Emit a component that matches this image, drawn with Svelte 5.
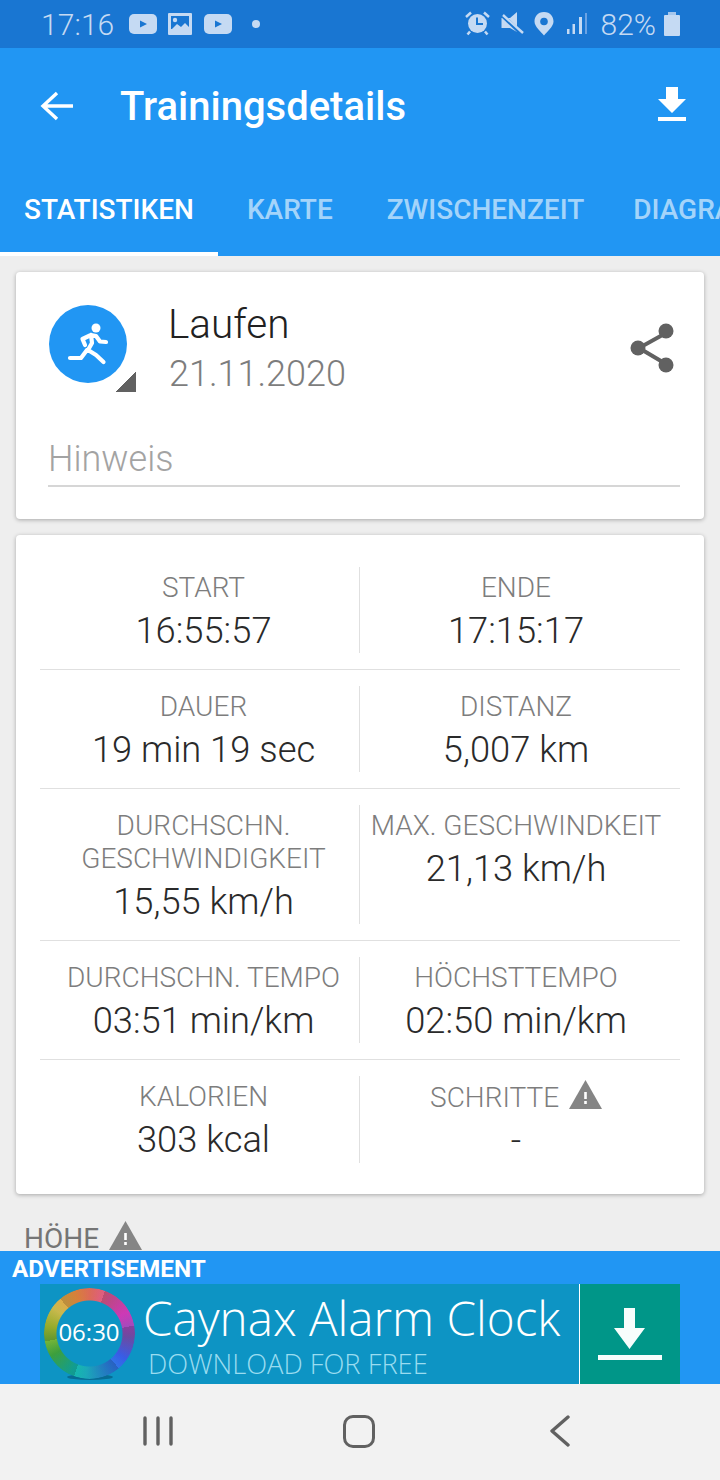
<script>
  const rows = [
    [{ label: "START", value: "16:55:57" }, { label: "ENDE", value: "17:15:17" }],
    [{ label: "DAUER", value: "19 min 19 sec" }, { label: "DISTANZ", value: "5,007 km" }],
    [
      { label: "DURCHSCHN. GESCHWINDIGKEIT", value: "15,55 km/h" },
      { label: "MAX. GESCHWINDKEIT", value: "21,13 km/h" },
    ],
    [{ label: "DURCHSCHN. TEMPO", value: "03:51 min/km" }, { label: "HÖCHSTTEMPO", value: "02:50 min/km" }],
    [{ label: "KALORIEN", value: "303 kcal" }, { label: "SCHRITTE", value: "-", warn: true }],
  ];
  const tabs = ["STATISTIKEN", "KARTE", "ZWISCHENZEIT", "DIAGRAMME"];
</script>

{#snippet warning()}
  <svg class="warn" width="33" height="29" viewBox="0 0 33 29">
    <path d="M16.500 0 L33 29 H0 Z" fill="#858585" />
    <rect x="15.200" y="12" width="2.600" height="7" fill="#fff" />
    <rect x="15.200" y="21" width="2.600" height="3" fill="#fff" />
  </svg>
{/snippet}

<div class="page">
  <div class="status">
    <span class="clock">17:16</span>
    <svg class="s-icons" width="134" height="24" viewBox="0 0 134 24">
      <rect x="1" y="1" width="28" height="20" rx="5" fill="#c5daf3" />
      <path d="M12 7.500 L19 11 L12 14.500 Z" fill="#1976d2" />
      <rect x="40" y="0" width="24" height="22" rx="1" fill="#c5daf3" />
      <rect x="43" y="3" width="18" height="13" fill="#1976d2" />
      <circle cx="47" cy="7" r="2.200" fill="#c5daf3" />
      <path d="M41 19 L49 11 L53 14 L57 10 L63 16 V21 H41 Z" fill="#c5daf3" />
      <rect x="76" y="1" width="28" height="20" rx="5" fill="#c5daf3" />
      <path d="M87 7.500 L94 11 L87 14.500 Z" fill="#1976d2" />
      <circle cx="128" cy="11" r="4" fill="#c5daf3" />
    </svg>
    <span class="grow"></span>
    <svg width="124" height="26" viewBox="0 0 124 26" class="s-right">
      <circle cx="12.500" cy="12.500" r="9.500" fill="#c5daf3" />
      <path d="M12 6.500 V13 H18" fill="none" stroke="#1976d2" stroke-width="2" />
      <path d="M1 6 L6 1.500 M24 6 L19 1.500 M5 20.500 L2.500 23.500 M20 20.500 L22.500 23.500" stroke="#c5daf3" stroke-width="2.500" />
      <path d="M36.500 7 H45 L52 1 V21 L45 17 H36.500 Z" fill="#c5daf3" />
      <path d="M38 5 L58 24" stroke="#1976d2" stroke-width="4" />
      <path d="M38 4 L58 22" stroke="#c5daf3" stroke-width="2.400" />
      <path d="M79 1 C72.500 1 69.500 6 69.500 10.500 C69.500 15.500 76 21 79 24.500 C82 21 88.500 15.500 88.500 10.500 C88.500 6 85.500 1 79 1 Z" fill="#c5daf3" />
      <circle cx="79" cy="10.500" r="3.800" fill="#1976d2" />
      <rect x="102" y="18" width="2.500" height="5" fill="#c5daf3" />
      <rect x="107.500" y="13" width="2.500" height="10" fill="#c5daf3" />
      <rect x="114" y="6" width="3" height="17" fill="#c5daf3" />
      <rect x="120" y="2" width="2" height="21" fill="#6ba3e4" />
    </svg>
    <span class="batt-text">82%</span>
    <svg class="batt" width="16" height="24" viewBox="0 0 16 24">
      <rect x="4" y="0" width="8" height="3" fill="#a5c6ec" />
      <rect x="0" y="3" width="16" height="21" rx="1" fill="#c5daf3" />
    </svg>
  </div>

  <header>
    <div class="toolbar">
      <svg class="back" width="36" height="32" viewBox="0 0 36 32">
        <path d="M34 16 H4 M18 3 L4 16 L18 29" fill="none" stroke="#fff" stroke-width="3.400" />
      </svg>
      <h1>Trainingsdetails</h1>
      <svg class="save" width="28" height="34" viewBox="0 0 28 34">
        <path d="M8 0 H20 V12 H28 L14 26 L0 12 H8 Z" fill="#fff" />
        <rect x="0" y="30" width="28" height="4" fill="#fff" />
      </svg>
    </div>
    <nav class="tabs">
      {#each tabs as tab, i}
        <div class="tab" class:active={i === 0}>{tab}</div>
      {/each}
    </nav>
  </header>

  <main>
    <section class="card head">
      <div class="top">
        <div class="avatar">
          <svg width="78" height="78" viewBox="0 0 78 78">
            <circle cx="39" cy="39" r="39" fill="#2196f3" />
            <circle cx="47" cy="23" r="4.500" fill="#fff" />
            <path d="M42 30 L47 31 L51 36.500 L57 37 M36 40 L33.500 34 L42 30 L43 38 L39 45 L47 50 L54.500 57 M38 45 L32 53 L21 53"
              fill="none" stroke="#fff" stroke-width="4.200" stroke-linecap="round" stroke-linejoin="round" />
          </svg>
          <span class="corner"></span>
        </div>
        <div class="title">
          <div class="name">Laufen</div>
          <div class="date">21.11.2020</div>
        </div>
        <svg class="share" width="46" height="50" viewBox="0 0 46 50">
          <path d="M36 10 L9 25 L36 41" fill="none" stroke="#616161" stroke-width="4" />
          <circle cx="36" cy="8" r="7.500" fill="#616161" />
          <circle cx="8" cy="25" r="7.500" fill="#616161" />
          <circle cx="36" cy="42" r="7.500" fill="#616161" />
        </svg>
      </div>
      <div class="note">Hinweis</div>
    </section>

    <section class="card stats">
      {#each rows as row}
        <div class="row">
          {#each row as cell}
            <div class="cell">
              <div class="label">
                {cell.label}
                {#if cell.warn}{@render warning()}{/if}
              </div>
              <div class="value">{cell.value}</div>
            </div>
          {/each}
        </div>
      {/each}
    </section>

    <div class="section-title">HÖHE {@render warning()}</div>
  </main>

  <aside class="ad">
    <div class="ad-label">ADVERTISEMENT</div>
    <div class="banner">
      <div class="ring-wrap">
        <div class="ring-shadow"></div>
        <div class="ring"></div>
        <span class="ring-time">06:30</span>
      </div>
      <div class="ad-text">
        <div class="ad-name">Caynax Alarm Clock</div>
        <div class="ad-sub">DOWNLOAD FOR FREE</div>
      </div>
      <div class="ad-btn">
        <svg width="64" height="52" viewBox="0 0 64 52">
          <path d="M26 0 H37 V20 H47 L31.500 41 L16 20 H26 Z" fill="#f7fdfc" />
          <rect x="0" y="47" width="64" height="5" fill="#f7fdfc" />
        </svg>
      </div>
    </div>
  </aside>

  <footer>
    <svg width="30" height="30" viewBox="0 0 30 30">
      <path d="M2 2 V28 M15 2 V28 M28 2 V28" stroke="#616161" stroke-width="3.400" stroke-linecap="round" />
    </svg>
    <span class="home"></span>
    <svg width="20" height="32" viewBox="0 0 20 32">
      <path d="M18 2 L2 16 L18 30" fill="none" stroke="#616161" stroke-width="3.400" stroke-linecap="round" stroke-linejoin="round" />
    </svg>
  </footer>
</div>

<style>
  :global(body) {
    margin: 0;
  }

  .page {
    width: 720px;
    height: 1480px;
    display: flex;
    flex-direction: column;
    overflow: hidden;
    background: #eee;
    font-family: Roboto, "Liberation Sans", sans-serif;
  }

  .status {
    height: 48px;
    flex: none;
    background: #1976d2;
    color: #c5daf3;
    display: flex;
    align-items: center;
    padding: 0 40px 0 41px;
    box-sizing: border-box;
  }
  .clock {
    font-size: 30px;
    font-weight: 300;
    margin-right: 14px;
    letter-spacing: 0.1px;
  }
  .grow {
    flex: 1;
  }
  .s-icons {
    margin-top: 1px;
  }
  .batt-text {
    font-size: 30px;
    font-weight: 300;
    margin: 0 8px 0 12px;
  }

  header {
    flex: none;
    height: 208px;
    background: #2196f3;
    box-sizing: border-box;
    display: flex;
    flex-direction: column;
    color: #fff;
  }
  .toolbar {
    height: 112px;
    display: flex;
    align-items: flex-start;
    padding: 42px 34px 0 39px;
    box-sizing: border-box;
  }
  .back {
    margin-right: 45px;
  }
  h1 {
    margin: -5px 0 0;
    flex: 1;
    font-size: 40px;
    line-height: 44px;
    font-weight: 500;
  }
  .save {
    margin-top: -3px;
  }
  .tabs {
    height: 96px;
    display: flex;
  }
  .tab {
    height: 96px;
    padding: 0 24px;
    margin-right: 6px;
    line-height: 99px;
    font-size: 28px;
    font-weight: 500;
    color: rgba(255, 255, 255, 0.6);
    white-space: nowrap;
    box-sizing: border-box;
  }
  .tab.active {
    color: #fff;
    width: 218px;
    margin-right: 5px;
    border-bottom: 4px solid #fff;
  }
  .tab:nth-child(3) {
    margin-right: 1px;
  }

  main {
    flex: 1;
    min-height: 0;
    overflow: hidden;
    padding: 16px 16px 0;
  }
  .card {
    background: #fff;
    border-radius: 4px;
    box-shadow: 0 1px 4px rgba(0, 0, 0, 0.3);
  }
  .head {
    height: 247px;
    box-sizing: border-box;
    padding: 33px 28px 0 32px;
    margin-bottom: 16px;
  }
  .top {
    display: flex;
    align-items: flex-start;
  }
  .avatar {
    position: relative;
    width: 78px;
    height: 78px;
    margin: 0 41px 0 1px;
  }
  .avatar svg {
    display: block;
  }
  .corner {
    position: absolute;
    right: -9px;
    bottom: -9px;
    width: 20px;
    height: 20px;
    background: linear-gradient(135deg, transparent 50%, #616161 50%);
  }
  .title {
    flex: 1;
    margin-top: -5px;
  }
  .name {
    font-size: 40.5px;
    font-weight: 300;
    line-height: 48px;
    color: #212121;
  }
  .date {
    font-size: 36px;
    font-weight: 300;
    line-height: 44px;
    margin: 4px 0 0 1px;
    color: #7d7d7d;
  }
  .share {
    margin-top: 18px;
  }
  .note {
    margin-top: 39px;
    width: 632px;
    height: 52px;
    font-size: 36px;
    font-weight: 300;
    line-height: 48px;
    color: #a3a3a3;
    border-bottom: 2px solid #d6d6d6;
    box-sizing: border-box;
  }

  .stats {
    padding: 16px 24px;
    box-sizing: border-box;
    height: 659px;
  }
  .row {
    display: grid;
    grid-template-columns: 312px 312px;
    padding: 16px 8px;
    border-bottom: 1px solid #e0e0e0;
  }
  .row:last-child {
    border-bottom: none;
  }
  .cell {
    text-align: center;
    box-sizing: border-box;
  }
  .cell:first-child {
    border-right: 1px solid #e0e0e0;
  }
  .label {
    font-size: 28px;
    font-weight: 300;
    line-height: 33px;
    color: #7d7d7d;
    padding-top: 4px;
  }
  .value {
    font-size: 36.3px;
    font-weight: 300;
    line-height: 43px;
    margin: 5px 0 1px;
    color: #2a2a2a;
  }
  .warn {
    vertical-align: -2px;
    margin-left: 3px;
  }
  .section-title {
    margin: 27px 0 0 8px;
    font-size: 28px;
    line-height: 34px;
    color: #757575;
    white-space: nowrap;
  }

  .ad {
    flex: none;
    height: 133px;
    background: #2196f3;
    position: relative;
  }
  .ad-label {
    height: 33px;
    padding-left: 12px;
    font-size: 24.3px;
    font-weight: 700;
    line-height: 36px;
    color: #fff;
  }
  .banner {
    margin: 0 40px;
    height: 100px;
    display: flex;
    background: #0d94c4;
  }
  .ring-wrap {
    position: relative;
    width: 103px;
    flex: none;
    display: flex;
    align-items: center;
    justify-content: center;
  }
  .ring {
    position: absolute;
    left: 4px;
    top: 4px;
    width: 91px;
    height: 91px;
    border-radius: 50%;
    background:
      repeating-conic-gradient(from 20deg, rgba(0, 0, 0, 0.16) 0deg, rgba(0, 0, 0, 0) 60deg),
      conic-gradient(#e8705c, #d84fa0 35deg, #d93cc0 60deg, #7a55b8 95deg, #3a60f0 125deg, #2a80e0 150deg, #1cb0c0 185deg, #14b8a8 205deg, #40a840 240deg, #a8c030 280deg, #d0c050 305deg, #f09040 340deg, #e8705c);
    -webkit-mask: radial-gradient(circle, transparent 32.5px, #000 33.5px);
    mask: radial-gradient(circle, transparent 32.5px, #000 33.5px);
  }
  .ring-shadow {
    position: absolute;
    left: 27px;
    top: 90px;
    width: 46px;
    height: 6px;
    border-radius: 50%;
    background: rgba(0, 60, 90, 0.45);
  }
  .ring-time {
    margin-left: -5px;
    margin-top: -5px;
    font-family: "Open Sans", sans-serif;
    font-size: 24px;
    color: #fff;
  }
  .ad-text {
    flex: 1;
    font-family: "Open Sans", sans-serif;
    font-weight: 300;
  }
  .ad-name {
    font-size: 47.6px;
    line-height: 50px;
    margin-top: 9px;
    color: #fff;
    white-space: nowrap;
  }
  .ad-sub {
    font-size: 27.3px;
    line-height: 30px;
    margin: 6px 0 0 5px;
    color: #9adcf0;
    white-space: nowrap;
  }
  .ad-btn {
    flex: none;
    width: 101px;
    border-left: 1px solid #fff;
    background: #009688;
    display: flex;
    justify-content: center;
    padding-top: 24px;
    box-sizing: border-box;
  }
  .ad-btn svg {
    display: block;
  }

  footer {
    flex: none;
    height: 96px;
    background: #f2f2f2;
    display: flex;
    align-items: center;
    padding: 0 150px 2px 143px;
    box-sizing: border-box;
    justify-content: space-between;
  }
  .home {
    width: 32px;
    height: 33px;
    margin-right: 5px;
    border: 3.6px solid #616161;
    border-radius: 10px;
    box-sizing: border-box;
  }
</style>
